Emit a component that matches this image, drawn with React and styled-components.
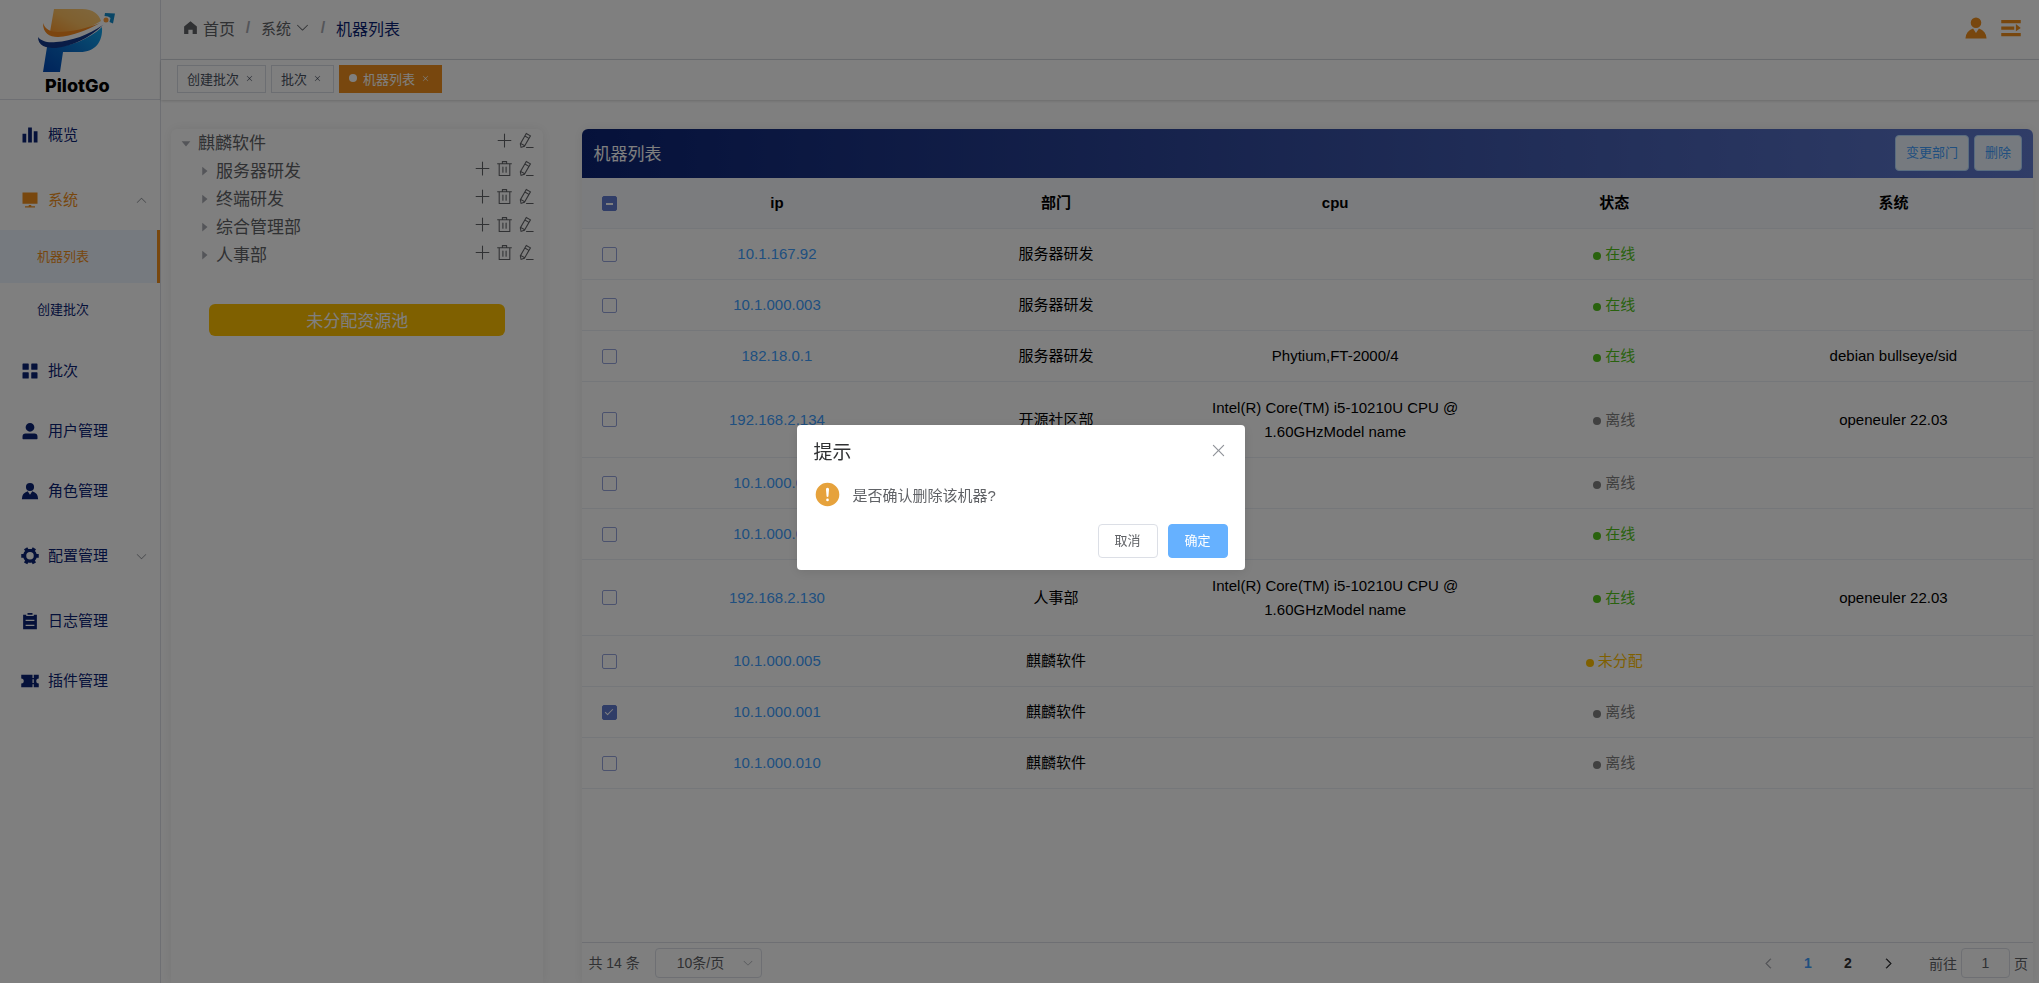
import React, { useEffect, useRef, useState } from 'react';
import styled, { createGlobalStyle } from 'styled-components';

const navy = '#0b2375';
const orange = '#f08f1c';
const blue = '#409eff';
const line = '#ebeef5';

const GlobalStyle = createGlobalStyle`
  *, *::before, *::after { box-sizing: border-box; }
  html, body { margin: 0; height: 100%; overflow: hidden; }
  body, button, input, select {
    font-family: 'Liberation Sans', 'Noto Sans CJK SC', sans-serif;
  }
  body { background: #fff; color: #606266; font-size: 15px; }
  a { text-decoration: none; color: inherit; }
  button { padding: 0; border: 0; background: none; color: inherit; cursor: pointer; }
`;

/* ---------- icons ---------- */

const paths = {
  home: 'M512 128 128 447.936V896h255.936V640H640v256h255.936V447.936z',
  histogram: 'M416 896V128h192v768H416zm-288 0V448h192v448H128zm576 0V320h192v576H704z',
  platform: 'M448 832v-64h128v64h192v64H256v-64h192zM128 704V128h768v576H128z',
  menu: 'M160 448a32 32 0 0 1-32-32V160.064a32 32 0 0 1 32-32h256a32 32 0 0 1 32 32V416a32 32 0 0 1-32 32H160zm448 0a32 32 0 0 1-32-32V160.064a32 32 0 0 1 32-32h255.936a32 32 0 0 1 32 32V416a32 32 0 0 1-32 32H608zM160 896a32 32 0 0 1-32-32V608a32 32 0 0 1 32-32h256a32 32 0 0 1 32 32v256a32 32 0 0 1-32 32H160zm448 0a32 32 0 0 1-32-32V608a32 32 0 0 1 32-32h255.936a32 32 0 0 1 32 32v256a32 32 0 0 1-32 32H608z',
  user: 'M288 320a224 224 0 1 0 448 0 224 224 0 1 0-448 0zm544 608H160a32 32 0 0 1-32-32v-96a160 160 0 0 1 160-160h448a160 160 0 0 1 160 160v96a32 32 0 0 1-32 32z',
  avatar: 'M628.736 528.896A416 416 0 0 1 928 928H96a415.872 415.872 0 0 1 299.264-399.104L512 704l116.736-175.104zM720 304a208 208 0 1 1-416 0 208 208 0 0 1 416 0z',
  tools: 'M764.416 254.72a351.68 351.68 0 0 1 86.336 149.184H960v192.064H850.752a351.68 351.68 0 0 1-86.336 149.312l54.72 94.72-166.272 96-54.592-94.72a352.64 352.64 0 0 1-172.48 0L371.136 936l-166.272-96 54.72-94.72a351.68 351.68 0 0 1-86.336-149.312H64v-192h109.248a351.68 351.68 0 0 1 86.336-149.312L204.8 160l166.208-96h.192l54.656 94.592a352.64 352.64 0 0 1 172.48 0L652.8 64h.128L819.2 160l-54.72 94.72zM704 499.968a192 192 0 1 0-384 0 192 192 0 0 0 384 0z',
  list: 'M704 192h160v736H160V192h160v64h384v-64zM288 512h448v-64H288v64zm0 256h448v-64H288v64zm96-576V96h256v96H384z',
  ticket: 'M640 832H64V640a128 128 0 1 0 0-256V192h576v160h64V192h256v192a128 128 0 1 0 0 256v192H704V672h-64v160zm0-416v192h64V416h-64z',
  expand: 'M128 192h768v128H128V192zm0 256h512v128H128V448zm0 256h768v128H128V704zm576-352 192 160-192 128V352z',
  plus: 'M480 480V128a32 32 0 0 1 64 0v352h352a32 32 0 1 1 0 64H544v352a32 32 0 1 1-64 0V544H128a32 32 0 0 1 0-64h352z',
  trash: 'M160 256H96a32 32 0 0 1 0-64h256V95.936a32 32 0 0 1 32-32h256a32 32 0 0 1 32 32V192h256a32 32 0 1 1 0 64h-64v672a32 32 0 0 1-32 32H192a32 32 0 0 1-32-32V256zm448-64v-64H416v64h192zM224 896h576V256H224v640zm192-128a32 32 0 0 1-32-32V416a32 32 0 0 1 64 0v320a32 32 0 0 1-32 32zm192 0a32 32 0 0 1-32-32V416a32 32 0 0 1 64 0v320a32 32 0 0 1-32 32z',
  pen: 'm199.04 672.64 193.984 112 224-387.968-193.92-112-224 388.032zm-23.872 60.16 32.896 148.288 144.896-45.696L175.168 732.8zM455.04 229.248l193.92 112 56.704-98.112-193.984-112-56.64 98.112zM104.32 708.8l384-665.024 304.768 175.936L409.152 884.8h.064l-248.448 78.336L104.32 708.8zm384 254.272v-64h448v64h-448z',
  down: 'M831.872 340.864 512 652.672 192.128 340.864a30.592 30.592 0 0 0-42.752 0 29.12 29.12 0 0 0 0 41.6L489.664 714.24a32 32 0 0 0 44.672 0l340.288-331.712a29.12 29.12 0 0 0 0-41.728 30.592 30.592 0 0 0-42.752 0z',
  close: 'M764.288 214.592 512 466.88 259.712 214.592a31.936 31.936 0 0 0-45.12 45.12L466.752 512 214.528 764.224a31.936 31.936 0 1 0 45.12 45.184L512 557.184l252.288 252.288a31.936 31.936 0 0 0 45.12-45.12L557.12 512.064l252.288-252.352a31.936 31.936 0 1 0-45.12-45.184z',
  caret: 'M384 192v640l384-320.064z',
  warning: 'M512 64a448 448 0 1 1 0 896 448 448 0 0 1 0-896zm0 192a58.432 58.432 0 0 0-58.24 63.744l23.36 256.384a35.072 35.072 0 0 0 69.76 0l23.296-256.384A58.432 58.432 0 0 0 512 256zm0 512a51.2 51.2 0 1 0 0-102.4 51.2 51.2 0 0 0 0 102.4z',
};

const Svg = styled.svg`
  display: block;
  flex: none;
  width: ${(p) => p.$size}px;
  height: ${(p) => p.$size}px;
  fill: ${(p) => p.$color || 'currentColor'};
  stroke: ${(p) => (p.$bold ? 'currentColor' : 'none')};
  stroke-width: 60;
  transform: rotate(${(p) => p.$turn || 0}deg);
`;

const Icon = ({ name, size = 20, color, turn, bold }) => (
  <Svg viewBox="0 0 1024 1024" aria-hidden="true" $size={size} $color={color} $turn={turn} $bold={bold}>
    <path d={paths[name]} />
  </Svg>
);

/* ---------- frame ---------- */

const Layout = styled.div`
  display: flex;
  height: 100vh;
`;

const Sidebar = styled.aside`
  flex: none;
  width: 161px;
  border-right: 1px solid #dcdfe6;
  color: ${navy};
`;

const Brand = styled.div`
  display: flex;
  flex-direction: column;
  height: 100px;
  padding: 6px 0 0 36px;
  border-bottom: 1px solid #dcdfe6;
`;

const BrandMark = styled.svg`
  display: block;
  width: 82px;
  height: 68px;
`;

const BrandName = styled.span`
  padding-left: 9px;
  color: #000;
  font: 800 18px/24px Inter, sans-serif;
`;

const Nav = styled.nav`
  padding-top: 5px;
`;

const NavGroup = styled.div`
  margin: 5px 0;
`;

const NavItem = styled.a`
  display: flex;
  align-items: center;
  gap: 8px;
  width: 100%;
  height: 60px;
  padding: 0 12px 0 20px;
  font-size: 15px;
  color: ${(p) => (p.$active ? orange : navy)};
`;

const NavLabel = styled.span`
  flex: 1;
  padding-bottom: 3px;
  text-align: left;
`;

const SubItem = styled.a`
  display: flex;
  align-items: center;
  height: 53px;
  padding: 0 0 3px 37px;
  font-size: 13px;
  color: ${(p) => (p.$active ? orange : navy)};
  background: ${(p) => (p.$active ? '#ecf5ff' : 'none')};
  border-right: ${(p) => (p.$active ? `3px solid ${orange}` : '0')};
`;

const Main = styled.div`
  display: flex;
  flex-direction: column;
  flex: 1;
  min-width: 0;
`;

const TopBar = styled.header`
  display: flex;
  align-items: center;
  justify-content: space-between;
  height: 60px;
  padding: 0 15px 4px 21px;
  border-bottom: 1px solid #dcdfe6;
`;

const Crumbs = styled.nav`
  display: flex;
  align-items: center;
  font-size: 16px;
`;

const Crumb = styled.a`
  display: flex;
  align-items: center;
  gap: 4px;
  font-size: ${(p) => p.$size || 16}px;
  color: ${(p) => (p.$current ? navy : '#606266')};
`;

const Slash = styled.span`
  width: 26px;
  text-align: center;
  font-weight: 700;
  color: #a8abb2;
`;

const UserTools = styled.div`
  display: flex;
  align-items: center;
  gap: 9px;
  color: ${orange};
`;

const Tags = styled.div`
  display: flex;
  align-items: center;
  gap: 5px;
  flex: none;
  height: 40px;
  padding: 0 16px 2px;
  box-shadow: 0 1px 3px rgba(0, 0, 0, 0.14), 0 0 3px rgba(0, 0, 0, 0.06);
`;

const Tag = styled.div`
  display: flex;
  align-items: center;
  height: 28px;
  padding: 0 9px 2px;
  border: 1px solid ${(p) => (p.$active ? orange : '#d8dce5')};
  background: ${(p) => (p.$active ? orange : '#fff')};
  color: ${(p) => (p.$active ? '#fff' : '#495060')};
  font-size: 13px;
`;

const TagDot = styled.span`
  width: 8px;
  height: 8px;
  margin-right: 6px;
  border-radius: 50%;
  background: #fff;
`;

const TagClose = styled.button`
  display: grid;
  place-items: center;
  width: 17px;
  height: 16px;
  padding-left: 4px;
`;

const Content = styled.main`
  display: flex;
  gap: 39px;
  flex: 1;
  min-height: 0;
  padding: 29px 6px 0 10px;
`;

const Card = styled.section`
  display: flex;
  flex-direction: column;
  border-radius: 6px 6px 0 0;
  box-shadow: 0 0 12px rgba(0, 0, 0, 0.08);
`;

/* ---------- department tree ---------- */

const TreeCard = styled(Card)`
  flex: 0 0 20%;
`;

const TreeList = styled.ul`
  margin: 0;
  padding: 0;
  list-style: none;
`;

const TreeRow = styled.li`
  display: flex;
  align-items: center;
  height: 28px;
  padding: 0 8px 0 ${(p) => 8 + p.$level * 18}px;
  font-size: 17px;
`;

const TreeName = styled.span`
  flex: 1;
  padding: 0 0 3px 5px;
`;

const TreeActions = styled.span`
  display: flex;
  gap: 5px;
  padding-bottom: 5px;
`;

const PoolButton = styled.button`
  height: 32px;
  margin: 35px 38px 0;
  padding-bottom: 2px;
  border-radius: 6px;
  background: #ffc000;
  color: #fff;
  font-size: 17px;
`;

/* ---------- machine table ---------- */

const TableCard = styled(Card)`
  flex: 1;
  min-width: 0;
`;

const CardHead = styled.div`
  display: flex;
  align-items: center;
  gap: 5px;
  flex: none;
  height: 49px;
  padding: 0 11px 2px 11px;
  border-radius: 6px 6px 0 0;
  background: linear-gradient(to right, ${navy}, #607acf);
  color: #fff;
`;

const CardTitle = styled.h1`
  flex: 1;
  margin: 0;
  font-size: 17px;
  font-weight: 400;
`;

const PlainButton = styled.button`
  height: 36px;
  padding: 0 10px 2px;
  border: 1px solid #b3d8ff;
  border-radius: 4px;
  background: #ecf5ff;
  color: ${blue};
  font-size: 13px;
`;

const TableArea = styled.div`
  flex: 1;
  min-height: 0;
  overflow: hidden;
`;

const Table = styled.table`
  width: 100%;
  table-layout: fixed;
  border-collapse: separate;
  border-spacing: 0;
  color: #000;
  font-size: 15px;
  line-height: 24px;
`;

const Th = styled.th`
  width: ${(p) => (p.$check ? '55px' : 'auto')};
  height: 51px;
  padding: 0;
  background: #f6f8fd;
  border-bottom: 1px solid ${line};
  font-weight: 700;
`;

const Tr = styled.tr`
  height: ${(p) => (p.$tall ? 76 : 51)}px;
`;

const Td = styled.td`
  padding: 0 12px;
  border-bottom: 1px solid ${line};
  text-align: center;
`;

const CheckTd = styled(Td)`
  padding: 0;
`;

const Check = styled.input`
  appearance: none;
  display: block;
  position: relative;
  width: 15px;
  height: 15px;
  margin: 0 auto;
  border: 1px solid #97a5dd;
  border-radius: 2px;
  background: #fff;

  &:checked, &:indeterminate {
    border-color: #607acf;
    background: #607acf;
  }
  &:checked::after {
    content: '';
    position: absolute;
    left: 4px;
    top: 1px;
    width: 4px;
    height: 8px;
    border: solid #fff;
    border-width: 0 1px 1px 0;
    transform: rotate(45deg);
  }
  &:indeterminate::after {
    content: '';
    position: absolute;
    left: 3px;
    top: 6px;
    width: 7px;
    height: 2px;
    background: #fff;
  }
`;

const IpLink = styled.a`
  color: ${blue};
`;

const statusColors = { 在线: '#52c41a', 离线: '#808080', 未分配: '#ffc000' };

const Status = styled.span`
  display: inline-flex;
  align-items: center;
  gap: 4px;
  vertical-align: top;
  color: ${(p) => statusColors[p.$state]};

  &::before {
    content: '';
    width: 8px;
    height: 8px;
    margin-top: 3px;
    border-radius: 50%;
    background: currentColor;
  }
`;

const Pager = styled.footer`
  display: flex;
  align-items: center;
  flex: none;
  height: 41px;
  padding: 0 5px 0 6px;
  border-top: 1px solid #dcdfe6;
  font-size: 14px;
`;

const Total = styled.span`
  padding-bottom: 2px;
`;

const SizeBox = styled.span`
  display: flex;
  align-items: center;
  position: relative;
  margin-left: 15px;

  svg {
    position: absolute;
    right: 8px;
    color: #a8abb2;
    pointer-events: none;
  }
`;

const SizeSelect = styled.select`
  appearance: none;
  width: 107px;
  height: 30px;
  padding: 0 0 0 21px;
  border: 1px solid #dcdfe6;
  border-radius: 4px;
  background: #fff;
  color: #606266;
  font-size: 14px;
`;

const PageList = styled.div`
  display: flex;
  margin-left: auto;
  padding-right: 21px;
`;

const PageButton = styled.button`
  display: grid;
  place-items: center;
  width: 40px;
  height: 30px;
  font-size: 14px;
  font-weight: 700;
  color: ${(p) => (p.$active ? blue : p.disabled ? '#a8abb2' : '#303133')};
`;

const Jump = styled.label`
  display: flex;
  align-items: center;
  gap: 4px;
`;

const JumpInput = styled.input`
  width: 49px;
  height: 30px;
  padding: 0;
  border: 1px solid #dcdfe6;
  border-radius: 4px;
  background: #fff;
  color: #606266;
  font-size: 14px;
  text-align: center;
`;

/* ---------- confirm dialog ---------- */

const Overlay = styled.div`
  position: fixed;
  inset: 0;
  display: grid;
  place-items: center;
  padding: 12px 0 0 2px;
  background: rgba(0, 0, 0, 0.5);
`;

const Dialog = styled.div`
  width: 448px;
  padding: 15px 17px 12px;
  border-radius: 4px;
  background: #fff;
  box-shadow: 0 2px 12px rgba(0, 0, 0, 0.1);
`;

const DialogHead = styled.div`
  display: flex;
  align-items: center;
  justify-content: space-between;
  height: 20px;
  color: #909399;
`;

const DialogTitle = styled.h2`
  margin: 0;
  color: #303133;
  font-size: 19px;
  font-weight: 400;
`;

const DialogBody = styled.p`
  display: flex;
  align-items: center;
  gap: 12px;
  height: 27px;
  margin: 21px 0 16px;
  font-size: 15px;
`;

const DialogFoot = styled.div`
  display: flex;
  justify-content: flex-end;
  gap: 10px;
`;

const DialogButton = styled.button`
  width: 60px;
  height: 34px;
  padding-bottom: 3px;
  border: 1px solid ${(p) => (p.$primary ? '#66b1ff' : '#dcdfe6')};
  border-radius: 4px;
  background: ${(p) => (p.$primary ? '#66b1ff' : '#fff')};
  color: ${(p) => (p.$primary ? '#fff' : '#606266')};
  font-size: 13px;
`;

const Logo = () => (
  <BrandMark viewBox="36 6 82 68" aria-hidden="true">
    <defs>
      <linearGradient id="sun" x1="0" y1="1" x2="1" y2="0">
        <stop offset="0" stopColor="#ff9426" />
        <stop offset="0.5" stopColor="#ffc060" />
        <stop offset="1" stopColor="#ffcf7c" />
      </linearGradient>
      <linearGradient id="sea" x1="0" y1="1" x2="1" y2="0">
        <stop offset="0" stopColor="#0046b4" />
        <stop offset="0.5" stopColor="#0a70cc" />
        <stop offset="1" stopColor="#12a8ee" />
      </linearGradient>
    </defs>
    <path fill="url(#sun)" d="M54 9H82C93 9 99 14 101 21 88 29 74 34 60 36 54 37 51 35 50 32Z" />
    <path fill="#f98a1e" d="M43 23C43 33 49 37 58 37 72 36 88 30 100 23 88 28 72 32 58 32 50 32 45 29 43 23Z" />
    <path fill="url(#sea)" d="M102 27C103 42 95 52 80 52H63L60 72H43L47 47C68 48 88 40 102 27Z" />
    <path fill="#12388c" d="M38 37C38 46 46 48 56 48 72 46 88 39 103 25 88 35 72 41 56 42 47 43 41 41 38 37Z" />
    <circle cx="106" cy="20" r="2.500" fill="#ff9d3a" />
    <path fill="#128ccc" d="M105 13 115 13.500 113 23.500 109.500 22 110.500 18 108 16.500 104.500 16Z" />
  </BrandMark>
);

const departments = [
  { name: '麒麟软件', level: 0 },
  { name: '服务器研发', level: 1 },
  { name: '终端研发', level: 1 },
  { name: '综合管理部', level: 1 },
  { name: '人事部', level: 1 },
];

const intel = 'Intel(R) Core(TM) i5-10210U CPU @ 1.60GHzModel name';

const machines = [
  { ip: '10.1.167.92', dept: '服务器研发', state: '在线' },
  { ip: '10.1.000.003', dept: '服务器研发', state: '在线' },
  { ip: '182.18.0.1', dept: '服务器研发', cpu: 'Phytium,FT-2000/4', state: '在线', os: 'debian bullseye/sid' },
  { ip: '192.168.2.134', dept: '开源社区部', cpu: intel, state: '离线', os: 'openeuler 22.03' },
  { ip: '10.1.000.006', dept: '人事部', state: '离线' },
  { ip: '10.1.000.007', dept: '人事部', state: '在线' },
  { ip: '192.168.2.130', dept: '人事部', cpu: intel, state: '在线', os: 'openeuler 22.03' },
  { ip: '10.1.000.005', dept: '麒麟软件', state: '未分配' },
  { ip: '10.1.000.001', dept: '麒麟软件', state: '离线' },
  { ip: '10.1.000.010', dept: '麒麟软件', state: '离线' },
];

const SideNav = () => (
  <Nav>
    <NavItem href="#overview"><Icon name="histogram" /><NavLabel>概览</NavLabel></NavItem>
    <NavGroup>
      <NavItem as="button" $active>
        <Icon name="platform" /><NavLabel>系统</NavLabel>
        <Icon name="down" size={13} color="#909399" turn={180} />
      </NavItem>
      <SubItem href="#machines" $active>机器列表</SubItem>
      <SubItem href="#new-batch">创建批次</SubItem>
    </NavGroup>
    <NavItem href="#batches"><Icon name="menu" /><NavLabel>批次</NavLabel></NavItem>
    <NavItem href="#users"><Icon name="user" /><NavLabel>用户管理</NavLabel></NavItem>
    <NavItem href="#roles"><Icon name="avatar" /><NavLabel>角色管理</NavLabel></NavItem>
    <NavGroup>
      <NavItem as="button">
        <Icon name="tools" /><NavLabel>配置管理</NavLabel>
        <Icon name="down" size={13} color="#909399" />
      </NavItem>
    </NavGroup>
    <NavItem href="#logs"><Icon name="list" /><NavLabel>日志管理</NavLabel></NavItem>
    <NavItem href="#plugins"><Icon name="ticket" /><NavLabel>插件管理</NavLabel></NavItem>
  </Nav>
);

const PageTag = ({ children, active }) => (
  <Tag $active={active}>
    {active && <TagDot />}
    {children}
    <TagClose aria-label="关闭标签"><Icon name="close" size={9} /></TagClose>
  </Tag>
);

export default function App() {
  const [selected, setSelected] = useState(['10.1.000.001']);
  const [open, setOpen] = useState(true);
  const allRef = useRef(null);

  const some = selected.length > 0 && selected.length < machines.length;
  useEffect(() => {
    allRef.current.indeterminate = some;
  }, [some]);

  const toggle = (ip) =>
    setSelected((now) => (now.includes(ip) ? now.filter((x) => x !== ip) : [...now, ip]));

  return (
    <>
      <GlobalStyle />
      <Layout>
        <Sidebar>
          <Brand><Logo /><BrandName>PilotGo</BrandName></Brand>
          <SideNav />
        </Sidebar>
        <Main>
          <TopBar>
            <Crumbs aria-label="路径">
              <Crumb href="#home"><Icon name="home" size={17} />首页</Crumb>
              <Slash>/</Slash>
              <Crumb as="button" $size={15}>系统<Icon name="down" size={15} /></Crumb>
              <Slash>/</Slash>
              <Crumb href="#machines" $current>机器列表</Crumb>
            </Crumbs>
            <UserTools>
              <button aria-label="用户"><Icon name="avatar" size={26} /></button>
              <button aria-label="折叠菜单"><Icon name="expand" size={26} /></button>
            </UserTools>
          </TopBar>
          <Tags>
            <PageTag>创建批次</PageTag>
            <PageTag>批次</PageTag>
            <PageTag active>机器列表</PageTag>
          </Tags>
          <Content>
            <TreeCard>
              <TreeList>
                {departments.map((d) => (
                  <TreeRow key={d.name} $level={d.level}>
                    <Icon name="caret" size={14} color="#a8abb2" turn={d.level ? 0 : 90} />
                    <TreeName>{d.name}</TreeName>
                    <TreeActions>
                      <button aria-label="新增"><Icon name="plus" size={17} /></button>
                      {d.level > 0 && <button aria-label="删除"><Icon name="trash" size={17} /></button>}
                      <button aria-label="编辑"><Icon name="pen" size={17} /></button>
                    </TreeActions>
                  </TreeRow>
                ))}
              </TreeList>
              <PoolButton>未分配资源池</PoolButton>
            </TreeCard>
            <TableCard>
              <CardHead>
                <CardTitle>机器列表</CardTitle>
                <PlainButton>变更部门</PlainButton>
                <PlainButton onClick={() => setOpen(true)}>删除</PlainButton>
              </CardHead>
              <TableArea>
                <Table>
                  <thead>
                    <tr>
                      <Th $check>
                        <Check
                          type="checkbox"
                          ref={allRef}
                          aria-label="全选"
                          checked={selected.length === machines.length}
                          onChange={(e) => setSelected(e.target.checked ? machines.map((m) => m.ip) : [])}
                        />
                      </Th>
                      <Th>ip</Th>
                      <Th>部门</Th>
                      <Th>cpu</Th>
                      <Th>状态</Th>
                      <Th>系统</Th>
                    </tr>
                  </thead>
                  <tbody>
                    {machines.map((m) => (
                      <Tr key={m.ip} $tall={m.cpu === intel}>
                        <CheckTd>
                          <Check
                            type="checkbox"
                            aria-label={m.ip}
                            checked={selected.includes(m.ip)}
                            onChange={() => toggle(m.ip)}
                          />
                        </CheckTd>
                        <Td><IpLink href={`#${m.ip}`}>{m.ip}</IpLink></Td>
                        <Td>{m.dept}</Td>
                        <Td>{m.cpu}</Td>
                        <Td><Status $state={m.state}>{m.state}</Status></Td>
                        <Td>{m.os}</Td>
                      </Tr>
                    ))}
                  </tbody>
                </Table>
              </TableArea>
              <Pager>
                <Total>共 14 条</Total>
                <SizeBox>
                  <SizeSelect aria-label="每页条数" defaultValue="10">
                    <option value="10">10条/页</option>
                    <option value="20">20条/页</option>
                  </SizeSelect>
                  <Icon name="down" size={12} />
                </SizeBox>
                <PageList>
                  <PageButton disabled aria-label="上一页"><Icon name="down" size={13} turn={90} bold /></PageButton>
                  <PageButton $active>1</PageButton>
                  <PageButton>2</PageButton>
                  <PageButton aria-label="下一页"><Icon name="down" size={13} turn={-90} bold /></PageButton>
                </PageList>
                <Jump>前往<JumpInput type="text" defaultValue="1" />页</Jump>
              </Pager>
            </TableCard>
          </Content>
        </Main>
      </Layout>
      {open && (
        <Overlay>
          <Dialog role="dialog" aria-modal="true" aria-labelledby="confirm-title">
            <DialogHead>
              <DialogTitle id="confirm-title">提示</DialogTitle>
              <button aria-label="关闭" onClick={() => setOpen(false)}><Icon name="close" size={19} /></button>
            </DialogHead>
            <DialogBody><Icon name="warning" size={27} color="#e6a23c" />是否确认删除该机器?</DialogBody>
            <DialogFoot>
              <DialogButton onClick={() => setOpen(false)}>取消</DialogButton>
              <DialogButton $primary onClick={() => setOpen(false)}>确定</DialogButton>
            </DialogFoot>
          </Dialog>
        </Overlay>
      )}
    </>
  );
}
